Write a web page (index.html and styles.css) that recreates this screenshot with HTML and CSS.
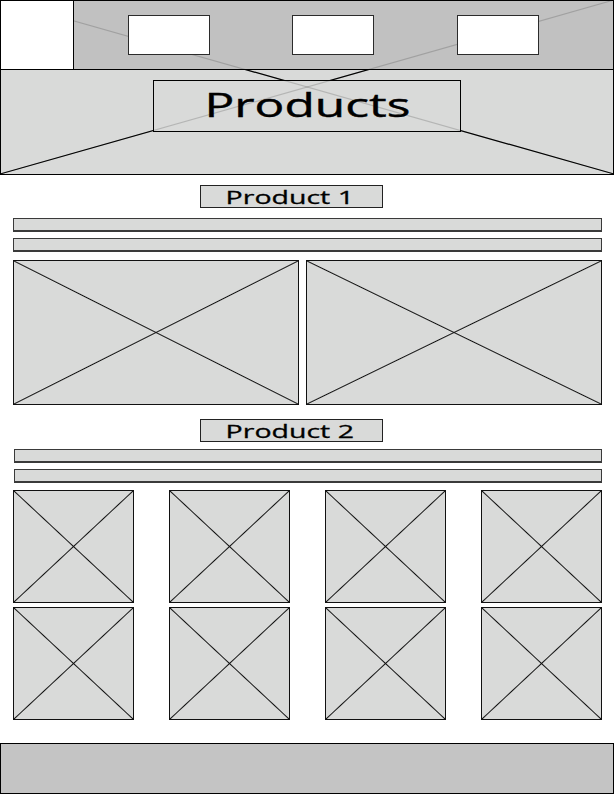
FILE: index.html
```html
<!DOCTYPE html>
<html lang="en">
<head>
    <meta charset="UTF-8">
    <meta name="viewport" content="width=device-width, initial-scale=1.0">
    <title>Products</title>
    <link rel="stylesheet" href="styles.css">
</head>
<body>
    <header class="masthead">
        <svg class="masthead-cross" viewBox="0 0 614 175" preserveAspectRatio="none">
            <defs>
                <clipPath id="hero-clip">
                    <path clip-rule="evenodd" d="M0 70H614V175H0Z M153 80H461V132H153Z"/>
                </clipPath>
            </defs>
            <g class="faint">
                <line x1="0" y1="0" x2="614" y2="174"/>
                <line x1="614" y1="0" x2="0" y2="174"/>
            </g>
            <g class="dark" clip-path="url(#hero-clip)">
                <line x1="0" y1="0" x2="614" y2="174"/>
                <line x1="614" y1="0" x2="0" y2="174"/>
            </g>
        </svg>
        <div class="topbar">
            <div class="logo"></div>
            <nav class="nav">
                <span class="nav-item"></span>
                <span class="nav-item"></span>
                <span class="nav-item"></span>
            </nav>
        </div>
        <div class="hero">
            <h1 class="hero-title"><span>Products</span></h1>
        </div>
    </header>

    <section class="product product-one">
        <h2 class="product-title"><span>Product 1</span></h2>
        <div class="bar"></div>
        <div class="bar"></div>
        <div class="gallery-wide">
            <div class="ph"></div>
            <div class="ph"></div>
        </div>
    </section>

    <section class="product product-two">
        <h2 class="product-title"><span>Product 2</span></h2>
        <div class="bar"></div>
        <div class="bar"></div>
        <div class="gallery-grid">
            <div class="ph"></div>
            <div class="ph"></div>
            <div class="ph"></div>
            <div class="ph"></div>
            <div class="ph"></div>
            <div class="ph"></div>
            <div class="ph"></div>
            <div class="ph"></div>
        </div>
    </section>

    <footer class="footer"></footer>
</body>
</html>
```

FILE: styles.css
```css
body {
    margin: 0;
    background: #fff;
    font-family: 'Open Sans', 'Liberation Sans', sans-serif;
    color: #000;
}

/* header */
.masthead {
    position: relative;
    width: 612px;
    border: 1px solid #000;
}
.masthead-cross {
    position: absolute;
    top: -1px;
    left: -1px;
    width: 614px;
    height: 175px;
    pointer-events: none;
}
.masthead-cross line {
    stroke-width: 1.2;
}
.masthead-cross .faint {
    stroke: rgba(0, 0, 0, 0.17);
}
.masthead-cross .dark {
    stroke: #000;
}
.topbar {
    display: flex;
    height: 68px;
    border-bottom: 1px solid #000;
    background: #c1c1c1;
}
.logo {
    position: relative;
    width: 72px;
    border-right: 1px solid #000;
    background: #fff;
}
.nav {
    display: flex;
    gap: 82px;
    padding: 14px 0 0 54px;
}
.nav-item {
    position: relative;
    width: 80px;
    height: 38px;
    border: 1px solid #2b2b2b;
    background: #fff;
}
.nav-item:last-child {
    margin-left: 1px;
}
.hero {
    display: flex;
    justify-content: center;
    height: 104px;
    background: #d9dad9;
}
.hero-title {
    width: 306px;
    height: 50px;
    margin: 10px 0 0;
    border: 1px solid #000;
    font-size: 32px;
    font-weight: normal;
    line-height: 47px;
    text-align: center;
    -webkit-text-stroke: 0.4px #000;
}
.hero-title span {
    display: inline-block;
    transform: scaleX(1.55);
}

/* product sections */
.product {
    padding: 0 12px 0 13px;
}
.product-one {
    margin-top: 10px;
}
.product-two {
    margin-top: 14px;
}
.product-title {
    width: 177px;
    height: 21px;
    margin: 0 0 0 187px;
    padding-right: 4px;
    border: 1px solid #222;
    background: #d9dad9;
    font-size: 19px;
    font-weight: normal;
    line-height: 22px;
    text-align: center;
    -webkit-text-stroke: 0.3px #000;
}
.product-title span {
    display: inline-block;
    transform: scaleX(1.5);
}
.bar {
    height: 11px;
    margin-top: 6px;
    border: 1px solid #3a3a3a;
    border-bottom-width: 2px;
    background: #d9dad9;
}
.product-one .product-title + .bar {
    margin-top: 10px;
}
.product-two .product-title + .bar {
    margin-top: 7px;
}
.product-two .bar {
    margin-left: 1px;
}

.ph {
    box-sizing: border-box;
    border: 1px solid #111;
    background:
        linear-gradient(to top right, transparent calc(50% - 1px), #111 50%, transparent calc(50% + 1px)),
        linear-gradient(to bottom right, transparent calc(50% - 1px), #111 50%, transparent calc(50% + 1px)),
        #d9dad9;
}
.gallery-wide {
    display: grid;
    grid-template-columns: 286px 296px;
    gap: 7px;
    margin-top: 8px;
}
.gallery-wide .ph {
    height: 145px;
}
.gallery-grid {
    display: grid;
    grid-template-columns: repeat(4, 121px);
    justify-content: space-between;
    row-gap: 4px;
    margin-top: 7px;
}
.gallery-grid .ph {
    height: 113px;
}

.footer {
    height: 49px;
    margin-top: 23px;
    border: 1px solid #000;
    background: #c4c4c4;
}
```
